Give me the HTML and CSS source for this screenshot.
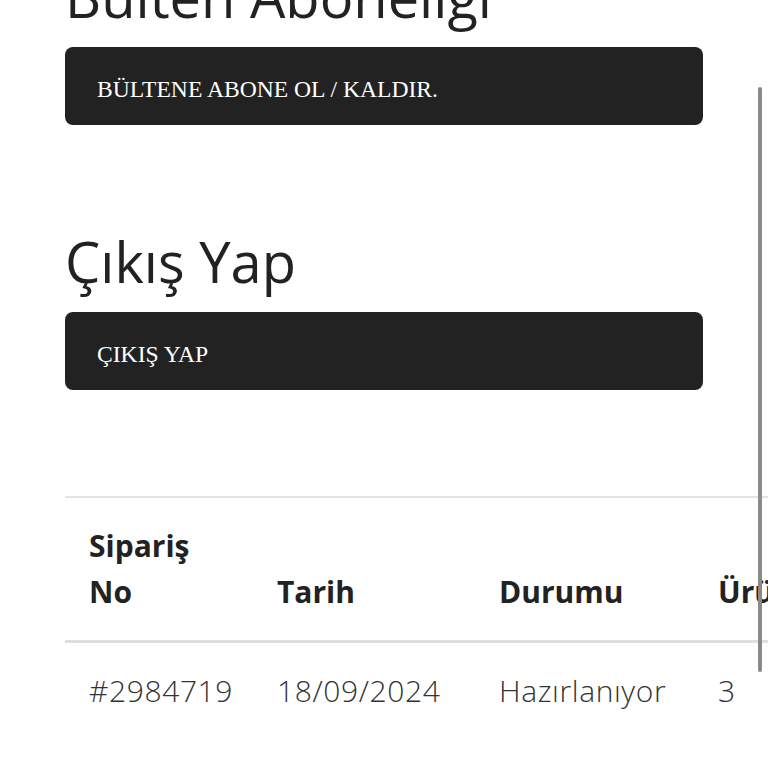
FILE: index.html
```html
<!DOCTYPE html>
<html lang="tr">
<head>
<meta charset="utf-8">
<title>Hesabım</title>
<link rel="stylesheet" href="styles.css">
</head>
<body>
<div class="page">
  <section class="block block-first">
    <h2 class="block-title">Bülten Aboneliği</h2>
    <a class="dark-btn" href="#">BÜLTENE ABONE OL / KALDIR.</a>
  </section>
  <section class="block">
    <h2 class="block-title">Çıkış Yap</h2>
    <a class="dark-btn" href="#">ÇIKIŞ YAP</a>
  </section>
  <div class="orders">
    <table class="order-table">
      <colgroup>
        <col class="c-no">
        <col class="c-date">
        <col class="c-status">
        <col class="c-count">
        <col class="c-total">
        <col class="c-action">
      </colgroup>
      <thead>
        <tr>
          <th>Sipariş<br>No</th>
          <th>Tarih</th>
          <th>Durumu</th>
          <th>Ürün Sayısı</th>
          <th>Toplam</th>
          <th>İşlem</th>
        </tr>
      </thead>
      <tbody>
        <tr>
          <td>#2984719</td>
          <td>18/09/2024</td>
          <td>Hazırlanıyor</td>
          <td>3</td>
          <td>1.249,00&nbsp;TL</td>
          <td>Detay</td>
        </tr>
      </tbody>
    </table>
  </div>
</div>
<div class="scroll-thumb"></div>
</body>
</html>
```
FILE: styles.css
```css
html, body {
  margin: 0;
  padding: 0;
  background: #ffffff;
  overflow: hidden;
  height: 768px;
}
body {
  font-family: "Open Sans", Lato, sans-serif;
  color: #222222;
}
.page {
  width: 638px;
  padding-left: 65px;
}
.block-first {
  margin-top: -37px;
}
.block {
  margin-bottom: 103px;
}
.block-title {
  font-family: "Open Sans", sans-serif;
  font-weight: 400;
  font-size: 56px;
  line-height: 67px;
  margin: 0 0 17px 0;
  color: #222222;
  white-space: nowrap;
}
.dark-btn {
  display: flex;
  align-items: center;
  box-sizing: border-box;
  height: 78px;
  padding: 7px 32px 0 32px;
  background: #222222;
  border-radius: 8px;
  color: #ffffff;
  text-decoration: none;
  font-family: "Liberation Serif", "Times New Roman", serif;
  font-size: 23.6px;
}
.orders {
  width: 1100px;
  padding-top: 3px;
}
.order-table {
  border-collapse: collapse;
  border-top: 2px solid #e4e4e4;
  table-layout: fixed;
  width: 1100px;
}
.c-no { width: 188px; }
.c-date { width: 222px; }
.c-status { width: 219px; }
.c-count { width: 250px; }
.c-total { width: 121px; }
.c-action { width: 100px; }
.order-table th,
.order-table td {
  text-align: left;
  padding: 25px 24px;
  font-size: 30px;
  line-height: 46px;
  white-space: nowrap;
  overflow: hidden;
}
.order-table th {
  font-weight: 700;
  color: #222222;
  vertical-align: bottom;
  border-bottom: 3px solid #dedede;
}
.order-table td {
  font-weight: 300;
  color: #333333;
  letter-spacing: 0.6px;
}
.scroll-thumb {
  position: fixed;
  right: 6px;
  top: 87px;
  width: 4px;
  height: 585px;
  background: #8a8a8a;
  border-radius: 2px;
}
```
